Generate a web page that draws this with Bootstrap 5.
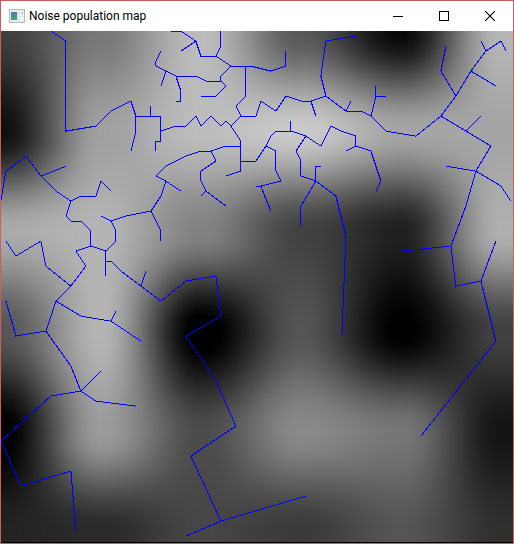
<!DOCTYPE html>
<html lang="en">
<head>
<meta charset="utf-8">
<meta name="viewport" content="width=device-width, initial-scale=1">
<title>Noise population map</title>
<link href="https://cdn.jsdelivr.net/npm/bootstrap@5.3.0/dist/css/bootstrap.min.css" rel="stylesheet">
<style>
  .app-window { border: 1px solid #cd5c5c; font-family: Roboto, "Open Sans", sans-serif; }
  .title-bar { height: 30px; }
  .title-text { font-size: 12px; line-height: 16px; }
  .caption-btn { width: 46px; height: 30px; color: #000; }
  .map-view { border-bottom: 1px solid #000; }
  .road { fill: none; stroke: #00f; stroke-width: 1; shape-rendering: crispEdges; }
</style>
<script src="https://cdn.jsdelivr.net/npm/bootstrap@5.3.0/dist/js/bootstrap.bundle.min.js"></script>
</head>
<body>
<div class="app-window d-flex flex-column vh-100 bg-white">
  <header class="title-bar d-flex align-items-center flex-shrink-0">
    <svg class="ms-2 flex-shrink-0" width="16" height="14" viewBox="0 0 16 14" aria-hidden="true">
      <defs><linearGradient id="pane" x1="0" y1="0" x2="0" y2="1"><stop offset="0" stop-color="#4a7aa0"/><stop offset="1" stop-color="#4aa37c"/></linearGradient></defs>
      <rect x=".5" y=".5" width="15" height="13" fill="#e9ebee" stroke="#b4b8bd"/>
      <rect x="2" y="3" width="6" height="8" fill="url(#pane)"/>
      <rect x="8" y="3" width="3" height="8" fill="#dfe6ea"/>
      <rect x="11" y="3" width="3" height="4" fill="#fff"/>
      <rect x="12" y="3" width="2" height="3" fill="#c4d6cf"/>
      <rect x="11" y="8" width="3" height="3" fill="#f6f6f6"/>
    </svg>
    <h1 class="title-text fw-normal text-black mb-0 ms-1 me-auto">Noise population map</h1>
    <button type="button" class="caption-btn btn rounded-0 border-0 p-0 d-flex align-items-center justify-content-center" aria-label="Minimize">
      <svg width="10" height="10" viewBox="0 0 10 10"><path d="M0 5.5H10" stroke="currentColor" shape-rendering="crispEdges"/></svg>
    </button>
    <button type="button" class="caption-btn btn rounded-0 border-0 p-0 d-flex align-items-center justify-content-center" aria-label="Maximize">
      <svg width="10" height="10" viewBox="0 0 10 10"><rect x=".5" y=".5" width="9" height="9" fill="none" stroke="currentColor" shape-rendering="crispEdges"/></svg>
    </button>
    <button type="button" class="caption-btn btn rounded-0 border-0 p-0 d-flex align-items-center justify-content-center" aria-label="Close">
      <svg width="10" height="10" viewBox="0 0 10 10"><path d="M0 0L10 10M10 0L0 10" stroke="currentColor" stroke-width="1.1"/></svg>
    </button>
  </header>
  <main class="map-view position-relative flex-grow-1 overflow-hidden">
    <canvas id="noise" class="position-absolute top-0 start-0 w-100 h-100"></canvas>
    <svg class="position-absolute top-0 start-0 w-100 h-100" viewBox="1 30 512 511" preserveAspectRatio="none" role="img" aria-label="Road network">
      <g transform="translate(.9 .1)"><path id="roads" class="road"/></g>
    </svg>
  </main>
</div>
<script>
  // Population density at the lattice points, 100 units apart.
  const lattice = [
    [62, 120, 188, 88, 8, 182],
    [15, 160, 188, 202, 165, 165],
    [170, 180, 130, 66, 32, 175],
    [85, 180, -8, 85, -2, 65],
    [-4, 155, 75, 137, 118, 20],
    [35, 42, 70, 58, 85, 48],
    [35, 42, 70, 58, 85, 48]
  ];
  const ease = t => t * t * (3 - 2 * t);
  const mix = (a, b, t) => a + (b - a) * t;

  function drawNoise() {
    const c = document.getElementById('noise');
    const w = c.width = c.clientWidth, h = c.height = c.clientHeight;
    const ctx = c.getContext('2d');
    const img = ctx.createImageData(w, h);
    for (let y = 0; y < h; y++) {
      const gy = y / h * 5.11, j = Math.floor(gy), v = ease(gy - j);
      for (let x = 0; x < w; x++) {
        const gx = x / w * 5.12, i = Math.floor(gx), u = ease(gx - i), k = Math.min(i + 1, 5);
        const g = mix(mix(lattice[j][i], lattice[j][k], u), mix(lattice[j + 1][i], lattice[j + 1][k], u), v);
        const p = (y * w + x) * 4;
        img.data[p] = img.data[p + 1] = img.data[p + 2] = g;
        img.data[p + 3] = 255;
      }
    }
    ctx.putImageData(img, 0, 0);
  }

  const roads = [
    '50,30 65,40 65,130 95,125 110,110 130,100 135,115 135,130 130,150',
    '135,115 160,115 160,140 155,140 155,150',
    '150,105 150,115',
    '160,130 175,125 185,125 195,115 200,125 210,115 220,125 225,120 230,125 240,115 255,115 260,100 275,110 285,95 300,100 310,100 325,95',
    '310,100 315,115',
    '230,125 240,140 240,170 225,175',
    '240,160 255,160 265,145 270,135 275,130 290,130 305,135 320,145 330,125 340,130 355,135 355,145 345,150',
    '355,145 370,150 380,180 375,190',
    '290,120 290,130',
    '265,145 275,150 275,170 280,180 260,185 255,185',
    '260,185 270,210',
    '305,135 295,150 300,160 300,175 315,180 315,165 320,165',
    '315,180 300,205 300,225',
    '315,180 335,195 345,235 341,335',
    '240,145 225,145 210,150 200,150 185,155 165,165 155,175 165,180 180,190',
    '210,150 215,160 200,170 200,180 205,190 225,205',
    '205,190 200,195',
    '165,180 160,195 150,210 160,230 160,240',
    '150,210 125,215 110,220 100,215',
    '110,220 115,230 115,240 105,250 105,275',
    '105,260 110,260 120,270 140,285 160,300 185,280 215,275 220,315 185,335 215,380 235,425 190,455 220,520 305,495',
    '220,520 185,535',
    '140,285 145,270',
    '105,250 90,245 90,230 80,220 70,220 65,215 70,200 80,195 95,195 100,180 110,190',
    '70,200 55,190 40,175 25,155 5,170 0,200',
    '40,175 65,165',
    '90,245 75,250 85,265 70,285 55,300 45,330 70,365 80,390 50,395 0,440 20,485 70,470 75,530',
    '80,390 100,370',
    '80,390 95,400 135,405',
    '70,285 45,265 40,240 15,255 5,240',
    '55,300 80,315 110,320 140,340',
    '110,320 115,310',
    '45,330 15,335 5,300',
    '170,30 180,30 195,40 200,55 215,55 230,65 250,65 270,70 285,65 285,50',
    '195,40 180,50',
    '215,55 220,45 220,30',
    '230,65 220,75 220,80 205,80 195,75 175,75 165,70 155,65 155,60 160,50',
    '165,70 160,85',
    '175,75 180,90 180,100 175,100',
    '220,80 225,85 215,95 200,95',
    '245,65 245,95 235,105 240,115',
    '325,95 320,75 325,40 355,35',
    '325,95 345,110 360,110 370,115 385,130 415,135 440,115 455,95 470,70 485,50 500,40 505,50',
    '485,50 480,40',
    '345,110 350,100',
    '370,115 375,95 375,85',
    '375,95 385,95',
    '455,95 440,70 445,45',
    '470,70 495,85',
    '440,115 465,130 490,145 475,170 465,205 450,245 455,285 480,280 495,340 420,435',
    '465,130 480,115',
    '445,165 475,170 500,185 510,200',
    '450,245 400,250',
    '480,280 495,240'
  ];
  document.getElementById('roads').setAttribute('d', roads.map(r => 'M' + r).join(''));
  drawNoise();
  addEventListener('resize', drawNoise);
</script>
</body>
</html>
